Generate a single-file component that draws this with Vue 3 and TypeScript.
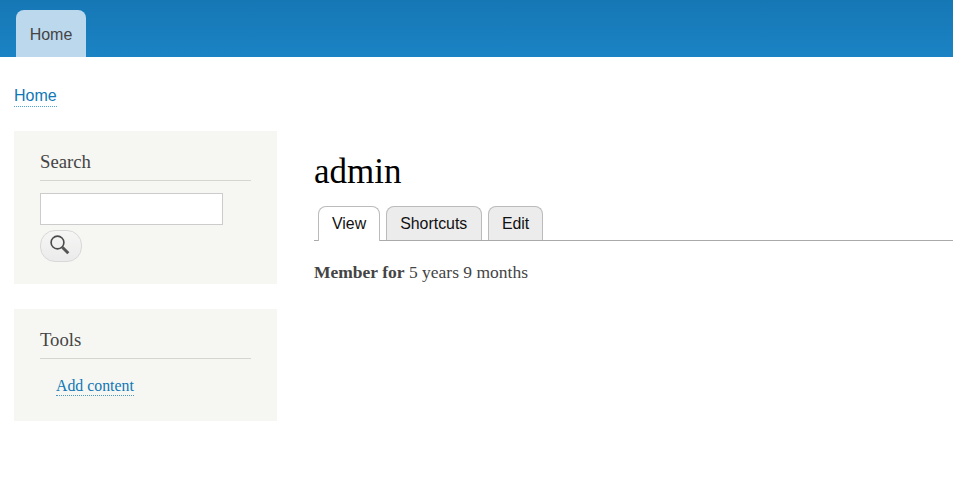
<script setup lang="ts">
const tabs: { label: string; active?: boolean }[] = [
  { label: 'View', active: true },
  { label: 'Shortcuts' },
  { label: 'Edit' },
]
</script>

<template>
  <div class="page">
    <header class="header">
      <a class="nav-tab" href="#">Home</a>
    </header>
    <div class="crumbs"><a class="crumb" href="#">Home</a></div>
    <div class="body">
      <aside class="sidebar">
        <section class="block search">
          <h2 class="block-title">Search</h2>
          <input class="search-input" type="text" />
          <button class="search-btn" type="button" aria-label="Search">
            <svg width="22" height="22" viewBox="0 0 22 22">
              <circle cx="8.5" cy="8.5" r="6.4" fill="none" stroke="#4a4a4a" stroke-width="1.6" />
              <path d="M13.3 13.3 L19.3 19.3" stroke="#555" stroke-width="3" fill="none" />
            </svg>
          </button>
        </section>
        <section class="block tools">
          <h2 class="block-title">Tools</h2>
          <a class="tool-link" href="#">Add content</a>
        </section>
      </aside>
      <main class="main">
        <h1 class="title">admin</h1>
        <ul class="tabs">
          <li v-for="t in tabs" :key="t.label" class="tab" :class="{ active: t.active }">{{ t.label }}</li>
        </ul>
        <p class="member"><strong>Member for</strong> 5 years 9 months</p>
      </main>
    </div>
  </div>
</template>

<style>
html, body { margin: 0; background: #fff; overflow: hidden; }
</style>

<style scoped>
.page { width: 953px; height: 479px; overflow: hidden; font-family: "Liberation Serif", serif; color: #3b3b3b; }
.header { height: 57px; box-sizing: border-box; padding: 10px 0 0 16px; background: linear-gradient(#1677b5, #1b83c4); display: flex; }
.nav-tab { width: 70px; height: 47px; box-sizing: border-box; padding-top: 16px; text-align: center; background: #bcd8ec; border-radius: 8px 8px 0 0; font: 16px/18px "Liberation Sans", sans-serif; color: #444; text-decoration: none; }
.crumbs { height: 74px; box-sizing: border-box; padding: 30px 0 0 14px; }
.crumb { display: inline-block; font: 16px/18px "Liberation Sans", sans-serif; color: #0f78b6; text-decoration: none; border-bottom: 1px dotted #4fa6d6; padding-bottom: 1px; }
.body { display: flex; }
.sidebar { width: 263px; margin-left: 14px; flex: none; display: flex; flex-direction: column; gap: 25px; }
.block { background: #f6f6f2; box-sizing: border-box; padding: 20px 26px 0; }
.search { height: 153px; }
.tools { height: 112px; }
.block-title { margin: 0; font-size: 18.72px; line-height: 22px; font-weight: 400; color: #444; padding-bottom: 7px; border-bottom: 1px solid #d6d6d0; }
.search-input { display: block; margin: 12px 0 5px; width: 183px; height: 32px; box-sizing: border-box; border: 1px solid #ccc; background: #fff; padding: 0; }
.search-btn { display: flex; align-items: center; justify-content: center; width: 42px; height: 32px; padding: 0 2px 3px 0; box-sizing: border-box; border: 1px solid #d8d8d8; border-radius: 15px; background: linear-gradient(#f6f6f5, #ebebeb); }
.tool-link { display: inline-block; margin: 18px 0 0 16px; font-size: 15.84px; line-height: 18px; color: #0f78b6; text-decoration: none; border-bottom: 1px dotted #4f96c4; }
.main { flex: 1; margin-left: 37px; min-width: 0; }
.title { margin: 19px 0 0; font-size: 35px; line-height: 44px; font-weight: 400; color: #000; }
.tabs { list-style: none; margin: 12px 0 0; padding: 0 0 0 4px; height: 34px; display: flex; gap: 6px; border-bottom: 1px solid #aaa; }
.tab { height: 34px; box-sizing: border-box; padding: 0 13px; font: 15.9px/34px "Liberation Sans", sans-serif; color: #111; background: #ececec; border: 1px solid #bbb; border-bottom: 0; border-radius: 8px 8px 0 0; }
.tab:nth-child(2) { padding-right: 13.6px; }
.tab.active { height: 35px; background: #fff; position: relative; margin-bottom: -1px; }
.member { margin: 20px 0 0; font-size: 17.5px; line-height: 22px; color: #444; }
</style>
